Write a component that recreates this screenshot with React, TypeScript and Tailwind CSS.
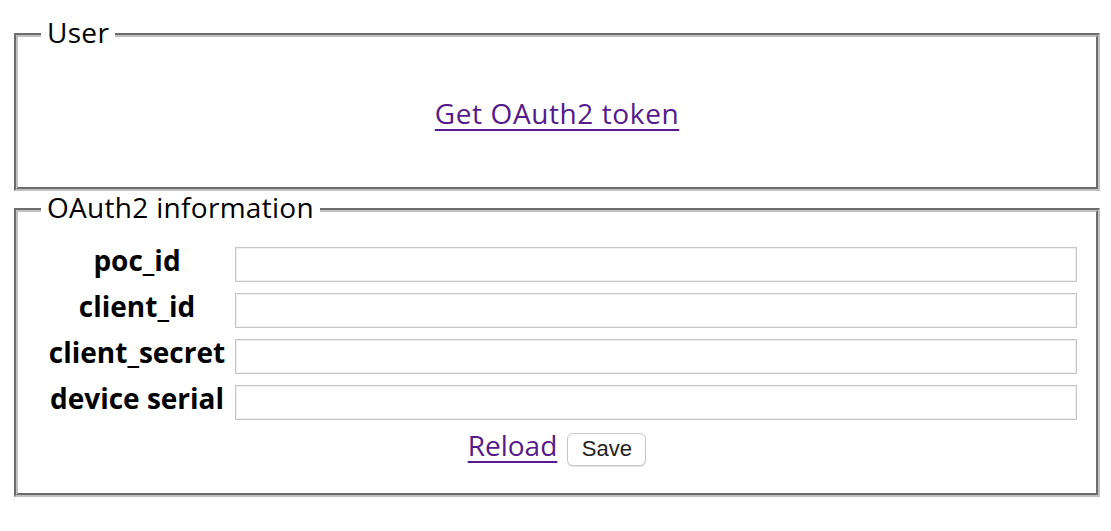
const fields = ['poc_id', 'client_id', 'client_secret', 'device serial'];

const App = () => {
  return (
    <div className="w-full bg-white pt-[18px] pl-[14px] pr-[11px] pb-[30px] font-['Open_Sans','Noto_Sans_CJK_KR',sans-serif] text-[28px] text-black">
      <fieldset className="m-0 p-0 border-[4px] [border-style:groove] border-[#c0c0c0]">
        <legend className="ml-[23px] px-[6px] pb-[6px] leading-[28px] tracking-[0.3px]">User</legend>
        <div className="pt-[47px] pb-[60px] text-center leading-[28px]">
          <a href="#" className="text-[#551a8b] tracking-[0.6px] underline decoration-[2px] underline-offset-[5px]">
            Get OAuth2 token
          </a>
        </div>
      </fieldset>

      <fieldset className="mt-[2px] p-0 border-[4px] [border-style:groove] border-[#c0c0c0]">
        <legend className="ml-[23px] px-[6px] pb-[6px] leading-[28px] tracking-[0.3px]">OAuth2 information</legend>
        <div className="pt-[20px] pb-[27px]">
          <div className="grid grid-cols-[184px_1fr] gap-x-[6px] gap-y-[11px] pl-[27px] pr-[19px] items-start">
            {fields.map((name) => (
              <div key={name} className="contents">
                <div className="text-center font-bold leading-[26px] whitespace-nowrap">{name}</div>
                <input
                  type="text"
                  className="h-[35px] w-full border border-[#c6c6c6] bg-white shadow-[inset_0_0_0_1px_#efefef] outline-none px-2 text-[18px]"
                />
              </div>
            ))}
          </div>
          <div className="mt-[11px] flex justify-center items-baseline gap-[10px]">
            <a href="#" className="leading-[28px] text-[#551a8b] underline decoration-[2px] underline-offset-[5px]">
              Reload
            </a>
            <button className="h-[33px] w-[79px] rounded-[6px] border border-[#c8c8c8] bg-white shadow-[0_1px_1px_rgba(0,0,0,0.12)] text-[22px] leading-[24px] text-[#222] font-['Liberation_Sans',sans-serif]">
              Save
            </button>
          </div>
        </div>
      </fieldset>
    </div>
  );
};

export default App;
